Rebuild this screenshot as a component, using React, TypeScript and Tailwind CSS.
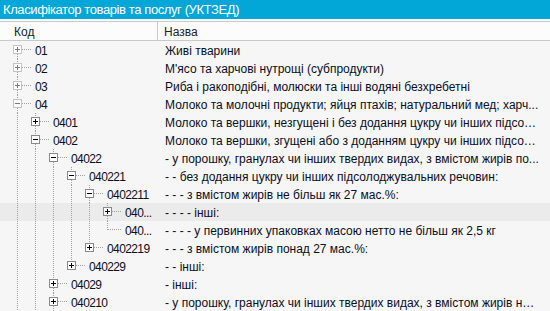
type Row = {
  code: string;
  name: string;
  level: number;
  state: "open" | "closed" | "leaf";
  hasNext: boolean;
  hi?: boolean;
};

const rows: Row[] = [
  { code: "01", name: "Живі тварини", level: 0, state: "closed", hasNext: true },
  { code: "02", name: "М'ясо та харчові нутрощі (субпродукти)", level: 0, state: "closed", hasNext: true },
  { code: "03", name: "Риба і ракоподібні, молюски та інші водяні безхребетні", level: 0, state: "closed", hasNext: true },
  { code: "04", name: "Молоко та молочні продукти; яйця птахів; натуральний мед; харч...", level: 0, state: "open", hasNext: true },
  { code: "0401", name: "Молоко та вершки, незгущені і без додання цукру чи інших підсол...", level: 1, state: "closed", hasNext: true },
  { code: "0402", name: "Молоко та вершки, згущені або з доданням цукру чи інших підсол...", level: 1, state: "open", hasNext: true },
  { code: "04022", name: "- у порошку, гранулах чи інших твердих видах, з вмістом жирів по...", level: 2, state: "open", hasNext: true },
  { code: "040221", name: "- - без додання цукру чи інших підсолоджувальних речовин:", level: 3, state: "open", hasNext: true },
  { code: "0402211", name: "- - - з вмістом жирів не більш як 27 мас.%:", level: 4, state: "open", hasNext: true },
  { code: "040...", name: "- - - - інші:", level: 5, state: "closed", hasNext: true, hi: true },
  { code: "040...", name: "- - - - у первинних упаковках масою нетто не більш як 2,5 кг", level: 5, state: "leaf", hasNext: false },
  { code: "0402219", name: "- - - з вмістом жирів понад 27 мас.%:", level: 4, state: "closed", hasNext: false },
  { code: "040229", name: "- - інші:", level: 3, state: "closed", hasNext: false },
  { code: "04029", name: "- інші:", level: 2, state: "closed", hasNext: true },
  { code: "040210", name: "- у порошку, гранулах чи інших твердих видах, з вмістом жирів не ...", level: 2, state: "closed", hasNext: true },
];

const dot = { stroke: "#a0a0a0", strokeWidth: 1, strokeDasharray: "1 1", shapeRendering: "crispEdges" as const };

function Guide({ on }: { on: boolean }) {
  return (
    <svg width="18" height="18" className="shrink-0">
      {on && <line x1="8.5" y1="0" x2="8.5" y2="18" {...dot} />}
    </svg>
  );
}

function Node({ row, first }: { row: Row; first: boolean }) {
  const root = row.level === 0;
  const border = root ? "#c4c4c4" : "#8a8a8a";
  const sign = root ? "#7c7c7c" : "#000";
  if (row.state === "leaf") {
    return (
      <svg width="26" height="18" className="shrink-0">
        <line x1="8.5" y1="0" x2="8.5" y2="9" {...dot} />
        <line x1="9" y1="8.5" x2="23" y2="8.5" {...dot} />
      </svg>
    );
  }
  return (
    <svg width="26" height="18" className="shrink-0">
      {!first && <line x1="8.5" y1="0" x2="8.5" y2="4" {...dot} />}
      {row.hasNext && <line x1="8.5" y1="13" x2="8.5" y2="18" {...dot} />}
      <line x1="13" y1="8.5" x2="23" y2="8.5" {...dot} />
      <rect x="4.5" y="4.5" width="8" height="8" fill="#fff" stroke={border} shapeRendering="crispEdges" />
      <line x1="6" y1="8.5" x2="11" y2="8.5" stroke={sign} shapeRendering="crispEdges" />
      {row.state === "closed" && (
        <line x1="8.5" y1="6" x2="8.5" y2="11" stroke={sign} shapeRendering="crispEdges" />
      )}
    </svg>
  );
}

function TreeRow({ row, first }: { row: Row; first: boolean }) {
  return (
    <div className={`flex h-[18px] items-center ${row.hi ? "bg-[#ebebeb]" : ""}`}>
      <div className="flex w-[158px] shrink-0 items-center overflow-hidden pl-[9px]">
        {Array.from({ length: row.level }).map((_, i) => (
          <Guide key={i} on={true} />
        ))}
        <Node row={row} first={first} />
        <span className="whitespace-nowrap pt-[2px] tracking-[-0.6px]">{row.code}</span>
      </div>
      <div className="min-w-0 flex-1 truncate whitespace-nowrap pl-[7px] pr-[10px] pt-[2px]">{row.name}</div>
    </div>
  );
}

export default function App() {
  return (
    <div className="h-[311px] w-[550px] overflow-hidden bg-[#f6f6f6] font-['Liberation_Sans',Arial,sans-serif] text-[12px] text-[#0c0e24]">
      <div className="flex h-[19px] items-center bg-[#03a7d7] pl-[3px] pt-px text-[13px] tracking-[-0.4px] text-white">
        Класифікатор товарів та послуг (УКТЗЕД)
      </div>
      <div className="h-[2px] bg-white" />
      <div className="flex h-[20px] border-y border-[#c9c9c9] bg-[#fcfcfc] text-[#222]">
        <div className="flex w-[158px] items-center border-r border-[#c9c9c9] pl-[14px] pt-[2px]">Код</div>
        <div className="flex items-center pl-[6px] pt-[2px]">Назва</div>
      </div>
      <div>
        {rows.map((r, i) => (
          <TreeRow key={i} row={r} first={i === 0} />
        ))}
      </div>
    </div>
  );
}
